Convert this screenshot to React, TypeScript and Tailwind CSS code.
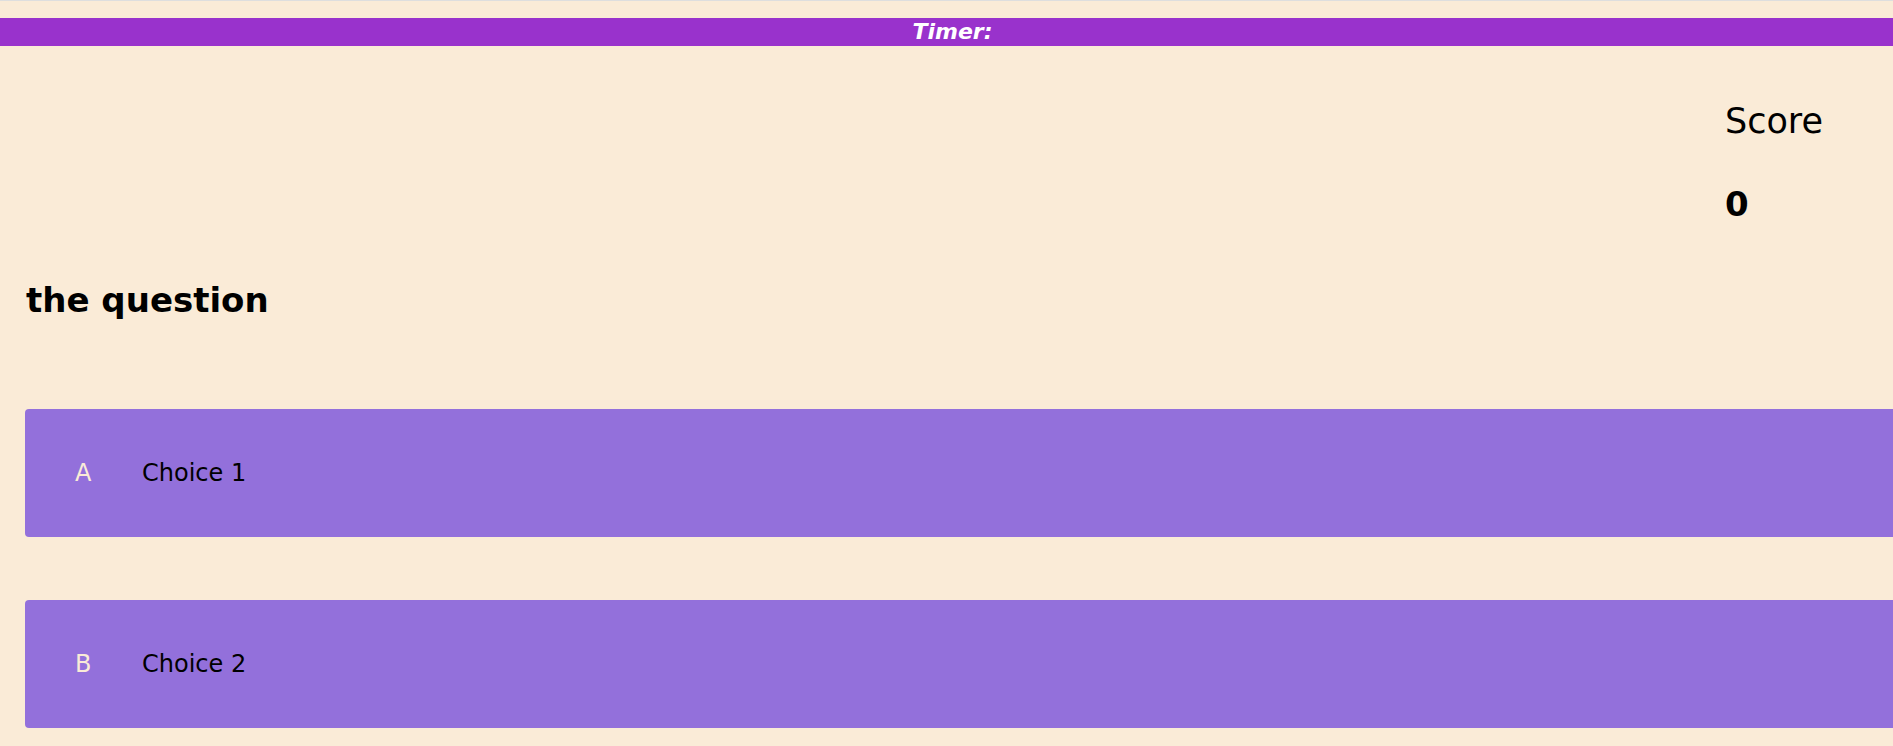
const choices = [
    { letter: "A", text: "Choice 1" },
    { letter: "B", text: "Choice 2" },
];

export default function App() {
    return (
        <div
            className="min-h-screen bg-[#faebd7] border-t border-[#dedede] overflow-hidden text-black"
            style={{ fontFamily: '"DejaVu Sans", "Open Sans", sans-serif' }}
        >
            <div className="h-[17px]" />
            <div className="h-[28px] bg-[#9932cc] flex justify-center pl-[12px]">
                <span className="text-[22px] leading-[28px] font-bold italic text-white">
                    Timer:
                </span>
            </div>

            <div className="flex justify-end pt-[55px]">
                <div className="w-[168px]">
                    <div className="text-[35px] leading-[40px]">Score</div>
                    <div className="mt-[43px] text-[34px] leading-[40px] font-bold">0</div>
                </div>
            </div>

            <h2 className="mt-[56px] ml-[26px] text-[34px] leading-[40px] font-bold">
                the question
            </h2>

            <div className="mt-[89px] flex flex-col gap-[63px]">
                {choices.map((c) => (
                    <div
                        key={c.letter}
                        className="ml-[25px] w-[1900px] h-[128px] rounded-[4px] bg-[#9370db] flex items-center pl-[50px] text-[24px]"
                    >
                        <span className="w-[17px] text-[#faebd7]">{c.letter}</span>
                        <span className="ml-[50px]">{c.text}</span>
                    </div>
                ))}
            </div>
        </div>
    );
}
